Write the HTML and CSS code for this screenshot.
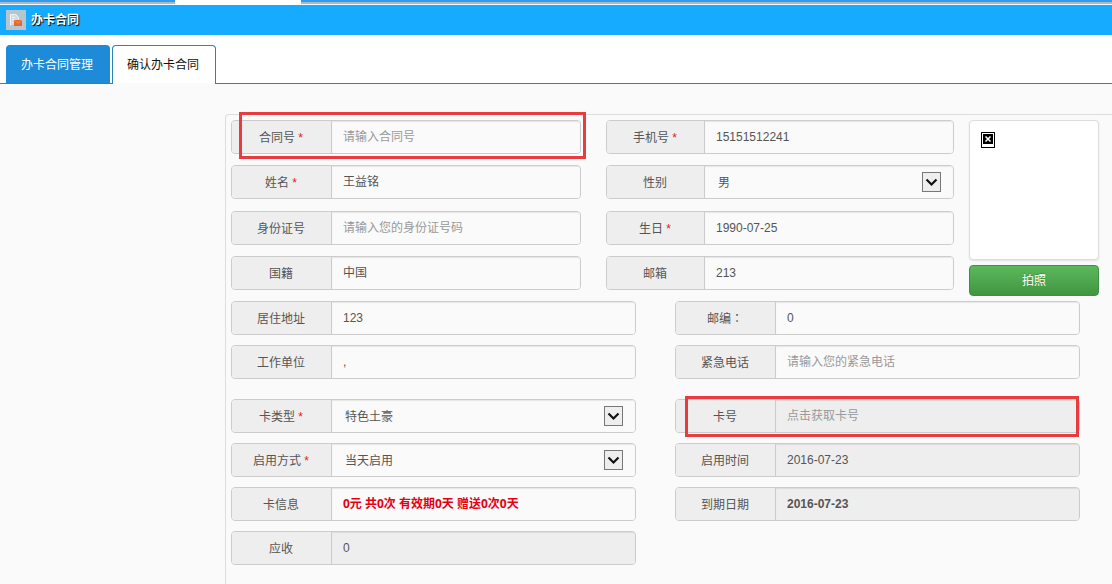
FILE: index.html
```html
<!DOCTYPE html>
<html lang="zh-CN">
<head>
<meta charset="utf-8">
<title>办卡合同</title>
<link rel="stylesheet" href="styles.css">
</head>
<body>
<div class="strip"><div class="strip-active"></div></div>
<header class="titlebar">
  <svg class="title-icon" viewBox="0 0 20 20" aria-hidden="true">
    <rect width="20" height="20" fill="#b5c6d0"/>
    <path d="M4 4h6l3 3v3h-5v5H4z" fill="#d3dade"/>
    <path d="M4.500 15.500v-11h5l3 3v2M6 7.500h3M6 9.500h3M6 12.500h1" fill="none" stroke="#f1f3f4"/>
    <rect x="8" y="10" width="8" height="6" fill="#e5682f"/>
    <path d="M8 10l4 3 4-3" fill="none" stroke="#f0935f"/>
  </svg>
  <h1 class="title">办卡合同</h1>
</header>
<nav class="tabs">
  <a class="tab tab-filled" href="#manage">办卡合同管理</a>
  <a class="tab tab-current" href="#confirm" aria-current="page">确认办卡合同</a>
</nav>
<form class="panel">
  <div class="top">
    <div class="fields fields-top">
      <div class="field marked marked-contract">
        <label class="label" for="contract">合同号 <span class="req">*</span></label>
        <input class="control" id="contract" type="text" placeholder="请输入合同号">
      </div>
      <div class="field">
        <label class="label" for="phone">手机号 <span class="req">*</span></label>
        <input class="control" id="phone" type="text" value="15151512241">
      </div>
      <div class="field">
        <label class="label" for="name">姓名 <span class="req">*</span></label>
        <input class="control" id="name" type="text" value="王益铭">
      </div>
      <div class="field">
        <label class="label" for="gender">性别</label>
        <select class="control select" id="gender"><option>男</option><option>女</option></select>
        <svg class="arrow" viewBox="0 0 19 20" aria-hidden="true"><rect x=".5" y=".5" width="18" height="19" fill="#eee" stroke="#777"/><path d="M4.500 7.500l5 5 5-5" fill="none" stroke="#111" stroke-width="2.200"/></svg>
      </div>
      <div class="field">
        <label class="label" for="idno">身份证号</label>
        <input class="control" id="idno" type="text" placeholder="请输入您的身份证号码">
      </div>
      <div class="field">
        <label class="label" for="birth">生日 <span class="req">*</span></label>
        <input class="control" id="birth" type="text" value="1990-07-25">
      </div>
      <div class="field">
        <label class="label" for="nation">国籍</label>
        <input class="control" id="nation" type="text" value="中国">
      </div>
      <div class="field">
        <label class="label" for="mail">邮箱</label>
        <input class="control" id="mail" type="text" value="213">
      </div>
    </div>
    <div class="photo">
      <div class="photo-frame">
        <svg class="photo-missing" viewBox="0 0 14 16" role="img" aria-label="无照片"><rect x=".5" y=".5" width="13" height="15" fill="#fff" stroke="#000"/><rect x="2" y="2" width="10" height="10" fill="#000"/><path d="M4.500 4.500l5 5M9.500 4.500l-5 5" stroke="#fff" stroke-width="1.500"/></svg>
      </div>
      <button class="shoot" type="button">拍照</button>
    </div>
  </div>
  <div class="fields fields-wide">
    <div class="field">
      <label class="label" for="addr">居住地址</label>
      <input class="control" id="addr" type="text" value="123">
    </div>
    <div class="field">
      <label class="label" for="zip" lang="zh-TW">邮编：</label>
      <input class="control" id="zip" type="text" value="0">
    </div>
    <div class="field">
      <label class="label" for="work">工作单位</label>
      <input class="control" id="work" type="text" value=",">
    </div>
    <div class="field">
      <label class="label" for="urgent">紧急电话</label>
      <input class="control" id="urgent" type="text" placeholder="请输入您的紧急电话">
    </div>
  </div>
  <div class="fields fields-wide fields-card">
    <div class="field">
      <label class="label" for="cardtype">卡类型 <span class="req">*</span></label>
      <select class="control select" id="cardtype"><option>特色土豪</option></select>
      <svg class="arrow" viewBox="0 0 19 20" aria-hidden="true"><rect x=".5" y=".5" width="18" height="19" fill="#eee" stroke="#777"/><path d="M4.500 7.500l5 5 5-5" fill="none" stroke="#111" stroke-width="2.200"/></svg>
    </div>
    <div class="field marked marked-card">
      <label class="label" for="cardno">卡号</label>
      <input class="control locked" id="cardno" type="text" placeholder="点击获取卡号" readonly>
    </div>
    <div class="field">
      <label class="label" for="mode">启用方式 <span class="req">*</span></label>
      <select class="control select" id="mode"><option>当天启用</option></select>
      <svg class="arrow" viewBox="0 0 19 20" aria-hidden="true"><rect x=".5" y=".5" width="18" height="19" fill="#eee" stroke="#777"/><path d="M4.500 7.500l5 5 5-5" fill="none" stroke="#111" stroke-width="2.200"/></svg>
    </div>
    <div class="field">
      <label class="label" for="start">启用时间</label>
      <input class="control locked" id="start" type="text" value="2016-07-23" readonly>
    </div>
    <div class="field">
      <label class="label" for="info">卡信息</label>
      <input class="control info" id="info" type="text" value="0元 共0次 有效期0天 赠送0次0天" readonly>
    </div>
    <div class="field">
      <label class="label" for="end">到期日期</label>
      <input class="control locked strong" id="end" type="text" value="2016-07-23" readonly>
    </div>
    <div class="field">
      <label class="label" for="due">应收</label>
      <input class="control locked" id="due" type="text" value="0" readonly>
    </div>
  </div>
</form>
</body>
</html>
```
FILE: styles.css
```css
* { box-sizing: border-box; }

body {
  margin: 0;
  min-height: 100vh;
  display: flex;
  flex-direction: column;
  background: #fafafa;
  color: #555;
  font: 12px/18px "Liberation Sans", "Noto Sans CJK SC", sans-serif;
}

.strip {
  height: 5px;
  padding-left: 175px;
  background: linear-gradient(#2f9bf0 0 2px, #a9b9c6 2px 4px, #f4f8fb 4px);
}
.strip-active { width: 126px; height: 5px; background: #fff; }

.titlebar {
  display: flex;
  align-items: center;
  gap: 5px;
  height: 30px;
  padding: 0 6px;
  background: #17abff;
}
.title-icon { width: 20px; height: 20px; }
.title {
  margin: 0;
  color: #fff;
  font-size: 12px;
  line-height: 18px;
  text-shadow: 1px 1px 1px #000;
}

.tabs {
  display: flex;
  gap: 2px;
  padding: 10px 6px 0;
  background: #fff;
  border-bottom: 1px solid #2a84b4;
}
.tab {
  height: 38px;
  padding: 10px 15px 10px 14px;
  min-width: 104px;
  border: 1px solid #1d8bd8;
  border-bottom: 0;
  border-radius: 4px 4px 0 0;
  text-decoration: none;
}
.tab-filled { background: #1d8bd8; color: #fff; }
.tab-current {
  height: 39px;
  margin-bottom: -1px;
  border-color: #2a84b4;
  background: linear-gradient(#fff 0 37px, #fafafa 37px);
  color: #111;
}

.panel {
  flex: 1;
  margin: 30px 0 0 225px;
  padding: 5px 13px 19px 5px;
  border: 1px solid #ddd;
  border-width: 1px 0 0 1px;
  border-top-left-radius: 4px;
}
.top { display: flex; gap: 15px; }
.fields { display: grid; }
.fields-top {
  flex: 1;
  grid-template-columns: 350fr 348fr;
  column-gap: 25px;
  align-content: space-between;
  padding-bottom: 6px;
}
.fields-wide {
  grid-template-columns: 1fr 1fr;
  gap: 10px 39px;
  margin-top: 5px;
  padding-right: 19px;
}
.fields-card { margin-top: 20px; }

.field {
  position: relative;
  display: flex;
  height: 34px;
  min-width: 0;
  border: 1px solid #ccc;
  border-radius: 4px;
}
.label {
  flex: none;
  width: 100px;
  padding: 8px 1px 6px 0;
  border-right: 1px solid #ccc;
  border-radius: 3px 0 0 3px;
  background: #eee;
  text-align: center;
}
.fields-top .field:nth-child(even) .label { width: 98px; }
.req { color: #e02020; }
.control {
  flex: 1;
  min-width: 0;
  margin: 0;
  padding: 0 12px 0 11px;
  border: 0;
  border-radius: 0 3px 3px 0;
  background: #fafafa;
  box-shadow: inset 0 1px 1px rgba(0, 0, 0, .08);
  color: #555;
  font: inherit;
}
.control::placeholder { color: #999; opacity: 1; }
.select { appearance: none; padding: 1px 36px 0 13px; }
.locked { background: #eee; }
.strong { font-weight: bold; }
.info {
  color: #e60012;
  font-family: "Open Sans", "Noto Sans CJK SC", sans-serif;
  font-weight: bold;
}

.arrow {
  position: absolute;
  top: 6px;
  right: 12px;
  width: 19px;
  height: 20px;
  pointer-events: none;
}

.marked::after {
  content: "";
  position: absolute;
  z-index: 1;
  border: 3px solid #e83c3f;
  pointer-events: none;
}
.marked-contract::after { inset: -9px -6px -6px 7px; }
.marked-card::after { inset: -4px 0 -5px 9px; }

.photo {
  flex: none;
  width: 130px;
  display: flex;
  flex-direction: column;
  gap: 5px;
}
.photo-frame {
  height: 140px;
  padding: 11px;
  border: 1px solid #ddd;
  border-radius: 4px;
  background: #fff;
  box-shadow: 0 1px 2px rgba(0, 0, 0, .1);
}
.photo-missing { display: block; width: 14px; height: 16px; }
.shoot {
  height: 31px;
  border: 1px solid #3e8f3e;
  border-radius: 4px;
  background: linear-gradient(#5cb85c, #419641);
  color: #fff;
  font: inherit;
  text-shadow: 0 -1px 0 rgba(0, 0, 0, .2);
}
```
